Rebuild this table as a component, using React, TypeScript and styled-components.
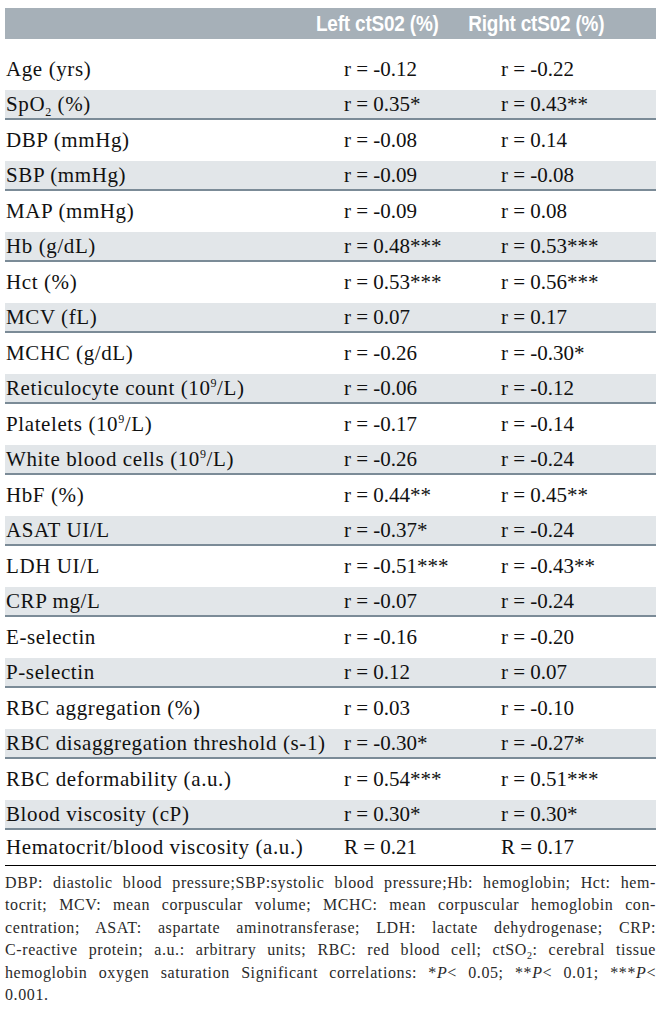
import styled, { createGlobalStyle } from "styled-components";

type Row = { label: React.ReactNode; left: string; right: string };

const rows: Row[] = [
	{ label: "Age (yrs)", left: "r = -0.12", right: "r = -0.22" },
	{ label: <>SpO<sub>2</sub> (%)</>, left: "r = 0.35*", right: "r = 0.43**" },
	{ label: "DBP (mmHg)", left: "r = -0.08", right: "r = 0.14" },
	{ label: "SBP (mmHg)", left: "r = -0.09", right: "r = -0.08" },
	{ label: "MAP (mmHg)", left: "r = -0.09", right: "r = 0.08" },
	{ label: "Hb (g/dL)", left: "r = 0.48***", right: "r = 0.53***" },
	{ label: "Hct (%)", left: "r = 0.53***", right: "r = 0.56***" },
	{ label: "MCV (fL)", left: "r = 0.07", right: "r = 0.17" },
	{ label: "MCHC (g/dL)", left: "r = -0.26", right: "r = -0.30*" },
	{ label: <>Reticulocyte count (10<sup>9</sup>/L)</>, left: "r = -0.06", right: "r = -0.12" },
	{ label: <>Platelets (10<sup>9</sup>/L)</>, left: "r = -0.17", right: "r = -0.14" },
	{ label: <>White blood cells (10<sup>9</sup>/L)</>, left: "r = -0.26", right: "r = -0.24" },
	{ label: "HbF (%)", left: "r = 0.44**", right: "r = 0.45**" },
	{ label: "ASAT UI/L", left: "r = -0.37*", right: "r = -0.24" },
	{ label: "LDH UI/L", left: "r = -0.51***", right: "r = -0.43**" },
	{ label: "CRP mg/L", left: "r = -0.07", right: "r = -0.24" },
	{ label: "E-selectin", left: "r = -0.16", right: "r = -0.20" },
	{ label: "P-selectin", left: "r = 0.12", right: "r = 0.07" },
	{ label: "RBC aggregation (%)", left: "r = 0.03", right: "r = -0.10" },
	{ label: "RBC disaggregation threshold (s-1)", left: "r = -0.30*", right: "r = -0.27*" },
	{ label: "RBC deformability (a.u.)", left: "r = 0.54***", right: "r = 0.51***" },
	{ label: "Blood viscosity (cP)", left: "r = 0.30*", right: "r = 0.30*" },
	{ label: "Hematocrit/blood viscosity (a.u.)", left: "R = 0.21", right: "R = 0.17" },
];

const App = () => {
	return (
		<>
			<GlobalStyle />
			<Page>
				<Header>
					<HeadText>Left ctS02 (%)</HeadText>
					<HeadText>Right ctS02 (%)</HeadText>
				</Header>
				<Body>
					{rows.map((row, i) => {
						const kind = i === rows.length - 1 ? "last" : i % 2 === 1 ? "gray" : "white";
						return (
							<DataRow key={i} $kind={kind}>
								<Label>{row.label}</Label>
								<Cell>{row.left}</Cell>
								<Cell>{row.right}</Cell>
							</DataRow>
						);
					})}
				</Body>
				<Notes>
					<Line>DBP: diastolic blood pressure;SBP:systolic blood pressure;Hb: hemoglobin; Hct: hem-</Line>
					<Line>tocrit; MCV: mean corpuscular volume; MCHC: mean corpuscular hemoglobin con-</Line>
					<Line>centration; ASAT: aspartate aminotransferase; LDH: lactate dehydrogenase; CRP:</Line>
					<Line>
						C-reactive protein; a.u.: arbitrary units; RBC: red blood cell; ctSO<sub>2</sub>: cerebral tissue
					</Line>
					<Line>
						hemoglobin oxygen saturation Significant correlations: *<i>P</i>&lt; 0.05; **<i>P</i>&lt; 0.01; ***<i>P</i>&lt;
					</Line>
					<Line $end>0.001.</Line>
				</Notes>
			</Page>
		</>
	);
};

export default App;

const GlobalStyle = createGlobalStyle`
	html, body {
		margin: 0;
		padding: 0;
		background: #ffffff;
	}
`;

const Page = styled.div`
	width: 651px;
	margin-left: 5px;
	padding-top: 8px;
	font-family: "Liberation Serif", "Times New Roman", serif;
	color: #111;
`;

const Header = styled.div`
	height: 31px;
	background: #a6b0b8;
	display: flex;
	justify-content: flex-end;
	align-items: center;
	gap: 7px;
	padding-right: 52px;
	font-family: "Liberation Sans", Arial, sans-serif;
	font-weight: 700;
	font-size: 22px;
	color: #ffffff;
`;

// condensed display face: squeeze a regular bold sans sideways
const HeadText = styled.span`
	display: inline-block;
	white-space: nowrap;
	transform: scaleX(0.86);
	transform-origin: right center;
	letter-spacing: -0.2px;
`;

const Body = styled.div`
	margin-top: 10px;
	display: flex;
	flex-direction: column;
`;

const DataRow = styled.div<{ $kind: "white" | "gray" | "last" }>`
	display: grid;
	grid-template-columns: 338px 157px 1fr;
	align-items: center;
	height: ${(p) => (p.$kind === "gray" ? "28px" : p.$kind === "last" ? "35px" : "41px")};
	background: ${(p) => (p.$kind === "gray" ? "#e2e6e9" : "#ffffff")};
	border-bottom: ${(p) =>
		p.$kind === "gray" ? "2px solid #7b8b97" : p.$kind === "last" ? "1px solid #000" : "none"};
	font-size: 21px;
	line-height: 1;
`;

const Cell = styled.div`
	padding-left: 1px;
	white-space: nowrap;
`;

const Label = styled(Cell)`
	letter-spacing: 0.6px;
	sub,
	sup {
		font-size: 12px;
		line-height: 0;
	}
`;

const Notes = styled.div`
	margin-top: 6px;
	font-size: 16px;
	letter-spacing: 0.6px;
	line-height: 22.4px;
	color: #2a2a2a;
	sub {
		font-size: 10px;
		line-height: 0;
	}
`;

const Line = styled.div<{ $end?: boolean }>`
	text-align: ${(p) => (p.$end ? "left" : "justify")};
	text-align-last: ${(p) => (p.$end ? "left" : "justify")};
	white-space: nowrap;
`;
